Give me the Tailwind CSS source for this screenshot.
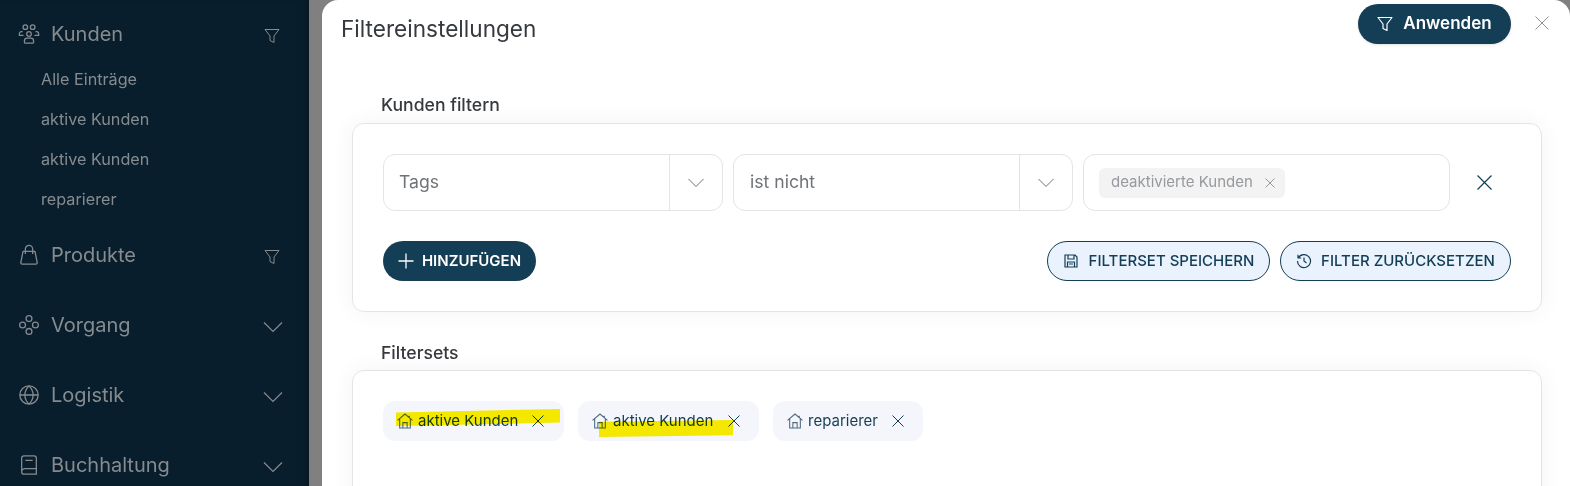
<!DOCTYPE html>
<html lang="de">
  <head>
    <meta charset="UTF-8" />
    <title>Filtereinstellungen</title>
    <script src="https://cdn.jsdelivr.net/npm/@tailwindcss/browser@4"></script>
  </head>
  <body class="h-[486px] w-[1570px] overflow-hidden flex bg-[#808080] font-['Inter',sans-serif]">
    <!-- Sidebar -->
    <aside class="w-[309px] h-full shrink-0 bg-[#091e2c] text-[#868b8f] pt-[14px] pl-[18px] pr-[26px] shadow-[inset_-10px_0_10px_-6px_rgba(0,0,0,0.2)]">
      <div class="h-10 flex items-center">
        <svg class="w-[22px] h-[22px] mr-[11px]" viewBox="0 0 24 24" fill="none" stroke="currentColor" stroke-width="1.4">
          <circle cx="8" cy="4.5" r="2.5" /><circle cx="16" cy="4.5" r="2.5" /><circle cx="12" cy="12" r="2.5" />
          <path d="M5 9.500H3.500C2.500 9.500 1.500 10.500 1.500 12v1.500H6M19 9.500h1.500c1 0 2 1 2 2.500v1.500H18" />
          <path d="M7 21v-1.500c0-2 1.500-3 3-3h4c1.500 0 3 1 3 3V21c0 .5-.5 1-1 1H8c-.5 0-1-.5-1-1z" />
        </svg>
        <span class="text-xl">Kunden</span>
        <svg class="w-4 h-4 ml-auto mr-[3px] mt-[3px]" viewBox="0 0 16 16" fill="none" stroke="currentColor" stroke-width="1"><path d="M1 1.500h14L10 8v6.500l-4-2V8z" stroke-linejoin="round" /></svg>
      </div>
      <ul class="mt-[5px] pl-[23px] text-[16.2px]">
        <li class="h-10 flex items-center">Alle Einträge</li>
        <li class="h-10 flex items-center">aktive Kunden</li>
        <li class="h-10 flex items-center">aktive Kunden</li>
        <li class="h-10 flex items-center">reparierer</li>
      </ul>
      <div class="mt-4 h-10 flex items-center">
        <svg class="w-[22px] h-[22px] mr-[11px]" viewBox="0 0 24 24" fill="none" stroke="currentColor" stroke-width="1.4"><path d="M5.500 8h13l2.500 12.500c0 1-.5 1.500-1.500 1.500h-15c-1 0-1.500-.5-1.500-1.500zM8 11V5.500a4 4 0 0 1 8 0V11" stroke-linejoin="round" /></svg>
        <span class="text-xl">Produkte</span>
        <svg class="w-4 h-4 ml-auto mr-[3px] mt-[3px]" viewBox="0 0 16 16" fill="none" stroke="currentColor" stroke-width="1"><path d="M1 1.500h14L10 8v6.500l-4-2V8z" stroke-linejoin="round" /></svg>
      </div>
      <div class="mt-[30px] h-10 flex items-center">
        <svg class="w-[22px] h-[22px] mr-[11px]" viewBox="0 0 24 24" fill="none" stroke="currentColor" stroke-width="1.4"><circle cx="12" cy="5" r="3.200" /><circle cx="12" cy="19" r="3.200" /><circle cx="5" cy="12" r="3.200" /><circle cx="19" cy="12" r="3.200" /></svg>
        <span class="text-xl">Vorgang</span>
        <svg class="w-5 h-5 ml-auto mt-[3px]" viewBox="0 0 20 20" fill="none" stroke="currentColor" stroke-width="1.200"><path d="M1 5.500l9 9 9-9" /></svg>
      </div>
      <div class="mt-[30px] h-10 flex items-center">
        <svg class="w-[22px] h-[22px] mr-[11px]" viewBox="0 0 24 24" fill="none" stroke="currentColor" stroke-width="1.400"><circle cx="12" cy="12" r="10" /><path d="M2 12h20M12 2c-6 6-6 14 0 20M12 2c6 6 6 14 0 20" /></svg>
        <span class="text-xl">Logistik</span>
        <svg class="w-5 h-5 ml-auto mt-[3px]" viewBox="0 0 20 20" fill="none" stroke="currentColor" stroke-width="1.200"><path d="M1 5.500l9 9 9-9" /></svg>
      </div>
      <div class="mt-[30px] h-10 flex items-center">
        <svg class="w-[22px] h-[22px] mr-[11px]" viewBox="0 0 24 24" fill="none" stroke="currentColor" stroke-width="1.400"><path d="M4 18V4.500C4 3 5 2 6.500 2h11C19 2 20 3 20 4.500V22H7c-2 0-3-1.500-3-2.500S5 16 7 16h13M8 7h8" /></svg>
        <span class="text-xl">Buchhaltung</span>
        <svg class="w-5 h-5 ml-auto mt-[3px]" viewBox="0 0 20 20" fill="none" stroke="currentColor" stroke-width="1.200"><path d="M1 5.500l9 9 9-9" /></svg>
      </div>
    </aside>

    <!-- Dialog -->
    <main class="ml-[13px] flex-1 h-full bg-white rounded-t-2xl text-[#36393d] relative overflow-hidden">
      <header class="h-[105px] pl-[19px] pr-[59px] pt-[4px] flex items-start justify-between">
        <h1 class="text-[22.6px] leading-[50px]">Filtereinstellungen</h1>
        <button class="h-10 w-[153px] rounded-full bg-[#143d56] text-white text-[17px] font-semibold flex items-center justify-center gap-[10px] shadow-sm">
          <svg class="w-4 h-4" viewBox="0 0 16 16" fill="none" stroke="currentColor" stroke-width="1.200"><path d="M1 1.500h14L10 8v6.500l-4-2V8z" stroke-linejoin="round" /></svg>
          Anwenden
        </button>
      </header>
      <!-- dialog close -->
      <svg class="absolute top-[16px] left-[1213px] w-[14px] h-[14px] text-[#8e9195]" viewBox="0 0 14 14" fill="none" stroke="currentColor" stroke-width="1"><path d="M.5.5l13 13M13.500.5l-13 13" /></svg>

      <section class="pl-[30px] pr-[28px]">
        <h2 class="pl-[29px] h-[38px] leading-[2px] pt-0 text-[17.6px] font-medium -mt-px">Kunden filtern</h2>
        <div class="h-[189px] -mt-[19px] border border-[#e2e4e7] rounded-xl shadow-[0_0_24px_rgba(0,0,0,0.05)] px-[30px] pt-[30px]">
          <div class="flex items-center gap-[10px]">
            <div class="w-[340px] h-[57px] border border-[#e2e4e7] rounded-xl flex items-center text-[#6f7276] text-[17.6px]">
              <span class="flex-1 pl-[15px]">Tags</span>
              <span class="w-[53px] h-full border-l border-[#e2e4e7] flex items-center justify-center">
                <svg class="w-4 h-4" viewBox="0 0 16 16" fill="none" stroke="currentColor" stroke-width="1"><path d="M.5 4l7.500 7.500L15.500 4" /></svg>
              </span>
            </div>
            <div class="w-[340px] h-[57px] border border-[#e2e4e7] rounded-xl flex items-center text-[#6f7276] text-[17.6px]">
              <span class="flex-1 pl-4">ist nicht</span>
              <span class="w-[53px] h-full border-l border-[#e2e4e7] flex items-center justify-center">
                <svg class="w-4 h-4" viewBox="0 0 16 16" fill="none" stroke="currentColor" stroke-width="1"><path d="M.5 4l7.500 7.500L15.500 4" /></svg>
              </span>
            </div>
            <div class="w-[367px] h-[57px] border border-[#e2e4e7] rounded-xl flex items-center pl-[15px]">
              <span class="h-[30px] w-[186px] rounded-md bg-[#f3f3f3] text-[#96999d] text-[15px] flex items-center justify-between pl-3 pr-[10px]">
                deaktivierte Kunden
                <svg class="w-[10px] h-[10px]" viewBox="0 0 10 10" fill="none" stroke="currentColor" stroke-width="1"><path d="M.5.5l9 9M9.500.5l-9 9" /></svg>
              </span>
            </div>
            <svg class="ml-[17px] w-[15px] h-[15px] text-[#143d56]" viewBox="0 0 15 15" fill="none" stroke="currentColor" stroke-width="1.200"><path d="M.5.5l14 14M14.500.5l-14 14" /></svg>
          </div>
          <div class="mt-[30px] flex items-center gap-[10px]">
            <button class="h-10 w-[153px] rounded-full bg-[#143d56] text-white text-[15px] font-semibold flex items-center justify-center gap-2">
              <svg class="w-4 h-4" viewBox="0 0 16 16" fill="none" stroke="currentColor" stroke-width="1.300"><path d="M8 .5v15M.5 8h15" /></svg>
              HINZUFÜGEN
            </button>
            <button class="ml-auto h-10 w-[223px] rounded-full bg-[#e9f2fd] border border-[#143d56] text-[#143d56] text-[15px] font-medium flex items-center justify-center gap-[10px]">
              <svg class="w-4 h-4" viewBox="0 0 16 16" fill="none" stroke="currentColor" stroke-width="1.200"><path d="M2 2h10l2 2v10H2zM5 2v4h6V2M4.500 14V9h7v5M6 11h4" /></svg>
              FILTERSET SPEICHERN
            </button>
            <button class="h-10 w-[231px] rounded-full bg-[#e9f2fd] border border-[#143d56] text-[#143d56] text-[15px] font-medium flex items-center justify-center gap-[9px]">
              <svg class="w-4 h-4" viewBox="0 0 16 16" fill="none" stroke="currentColor" stroke-width="1.200"><path d="M2.300 5a6.500 6.500 0 1 1-.8 3M2 1.800V5h3.200M8 4.500V8l2.500 2" /></svg>
              FILTER ZURÜCKSETZEN
            </button>
          </div>
        </div>

        <h2 class="pl-[29px] mt-[31px] h-[27px] text-[17.6px] font-medium leading-[20px]">Filtersets</h2>
        <div class="h-[200px] border border-[#e2e4e7] rounded-xl shadow-[0_0_24px_rgba(0,0,0,0.05)] px-[30px] pt-[30px] flex items-start gap-[14px]">
          <span class="relative h-10 w-[181px] rounded-xl bg-[#f4f6fb] text-[#143d56] text-[15px] flex items-center pl-[14px]">
            <svg class="w-4 h-4 mr-[5px] text-[#4d6a7e]" viewBox="0.5 1 15 14" fill="none" stroke="currentColor" stroke-width="1"><path d="M1 7.500L8 1.500l7 6M3 6v8.500h10V6M6 14.500V9.500h4v5M12 3v2" /></svg>
            aktive Kunden
            <svg class="absolute right-[20px] w-3 h-3" viewBox="0 0 12 12" fill="none" stroke="currentColor" stroke-width="1"><path d="M.5.5l11 11M11.500.5l-11 11" /></svg>
            <span class="absolute left-[13px] top-[8px] w-[164px] h-[17px] bg-[#fff000] mix-blend-multiply [clip-path:polygon(0_20%,100%_0,100%_80%,0_100%)]"></span>
          </span>
          <span class="relative h-10 w-[181px] rounded-xl bg-[#f4f6fb] text-[#143d56] text-[15px] flex items-center pl-[14px]">
            <svg class="w-4 h-4 mr-[5px] text-[#4d6a7e]" viewBox="0.5 1 15 14" fill="none" stroke="currentColor" stroke-width="1"><path d="M1 7.500L8 1.500l7 6M3 6v8.500h10V6M6 14.500V9.500h4v5M12 3v2" /></svg>
            aktive Kunden
            <svg class="absolute right-[19px] w-3 h-3" viewBox="0 0 12 12" fill="none" stroke="currentColor" stroke-width="1"><path d="M.5.5l11 11M11.500.5l-11 11" /></svg>
            <span class="absolute left-[21px] top-[19px] w-[134px] h-[17px] bg-[#fff000] mix-blend-multiply [clip-path:polygon(0_10%,100%_0,100%_90%,0_100%)]"></span>
          </span>
          <span class="relative h-10 w-[150px] rounded-xl bg-[#f4f6fb] text-[#143d56] text-[15px] flex items-center pl-[14px]">
            <svg class="w-4 h-4 mr-[5px] text-[#4d6a7e]" viewBox="0.5 1 15 14" fill="none" stroke="currentColor" stroke-width="1"><path d="M1 7.500L8 1.500l7 6M3 6v8.500h10V6M6 14.500V9.500h4v5M12 3v2" /></svg>
            reparierer
            <svg class="absolute right-[19px] w-3 h-3" viewBox="0 0 12 12" fill="none" stroke="currentColor" stroke-width="1"><path d="M.5.5l11 11M11.500.5l-11 11" /></svg>
          </span>
        </div>
      </section>
    </main>
  </body>
</html>
